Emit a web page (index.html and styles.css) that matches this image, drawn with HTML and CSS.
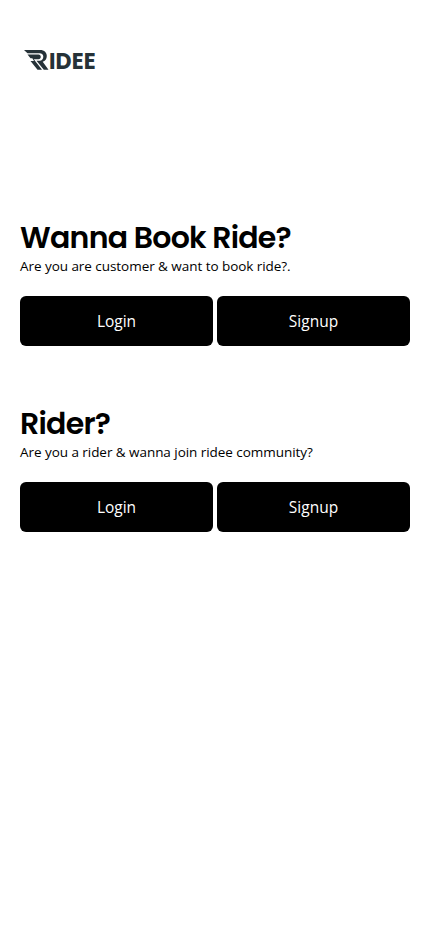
FILE: index.html
```html
<!DOCTYPE html>
<html lang="en">
<head>
<meta charset="utf-8">
<meta name="viewport" content="width=device-width, initial-scale=1">
<title>Ridee</title>
<link rel="stylesheet" href="styles.css">
</head>
<body>
<header class="logo">
  <svg class="logo-mark" viewBox="0 0 25 21" width="25" height="21" aria-hidden="true">
    <path d="M0 1H16C20.5 1 22.8 3.7 22.8 7C22.8 10 21.2 12 18.7 12.8L24.5 20.7H19.8L12.5 11.8H15.5C18 11.8 19.3 9.8 19.3 7.8C19.3 5.5 18 4.2 15.5 4.2H3.5Z"/>
    <path d="M3.5 5.5H14.5C17.5 5.5 17.5 10.3 14.5 10.3H9.8L18 20.7H13.5L6.5 12H10L8.3 9.3H6.5Z"/>
  </svg>
  <span class="logo-text">IDEE</span>
</header>
<main>
  <section class="group">
    <h1 class="title">Wanna Book Ride?</h1>
    <p class="text">Are you are customer &amp; want to book ride?.</p>
    <div class="actions"><a class="button">Login</a><a class="button">Signup</a></div>
  </section>
  <section class="group">
    <h1 class="title">Rider?</h1>
    <p class="text">Are you a rider &amp; wanna join ridee community?</p>
    <div class="actions"><a class="button">Login</a><a class="button">Signup</a></div>
  </section>
</main>
</body>
</html>
```
FILE: styles.css
```css
* { box-sizing: border-box; margin: 0; padding: 0; }
body { background: #fff; color: #000; font-family: "Segoe UI", "Open Sans", sans-serif; padding: 0 20px; }
.logo { display: flex; align-items: flex-start; height: 170px; margin-top: 49px; padding-left: 4px; color: #263238; }
.logo-mark { fill: currentColor; flex: none; }
.logo-text { font: 700 22px/26px Poppins, Lato, sans-serif; letter-spacing: 0.1px; }
.group { height: 186px; }
.title { font: 600 30px/38px Poppins, Inter, sans-serif; letter-spacing: -0.75px; white-space: nowrap; }
.text { font-size: 13.5px; line-height: 18px; letter-spacing: -0.05px; white-space: nowrap; }
.actions { display: flex; gap: 4px; margin-top: 21px; }
.button { flex: 1; height: 50px; border-radius: 6px; background: #000; color: #fff; font-size: 15.5px; line-height: 51px; text-align: center; }
```
